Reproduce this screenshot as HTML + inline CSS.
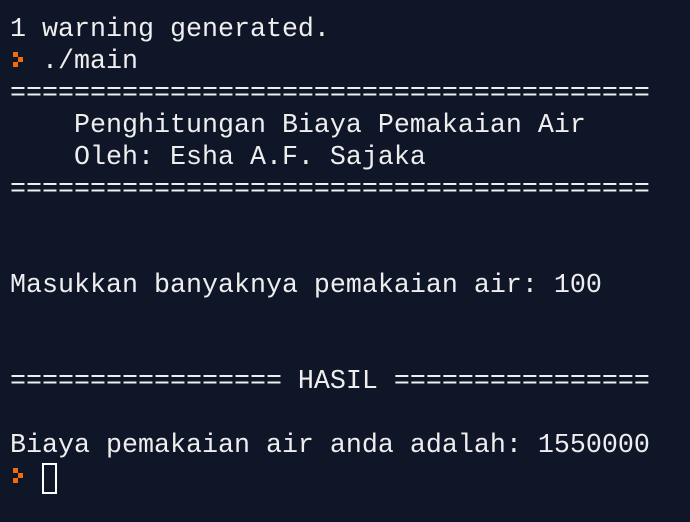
<!DOCTYPE html>
<html><head><meta charset="utf-8"><style>
html,body{margin:0;padding:0;background:#0e1628;width:690px;height:522px;overflow:hidden}
pre{margin:0;position:absolute;left:10px;top:14px;font-family:"Liberation Mono",monospace;font-size:26.67px;line-height:32px;color:#eeeeee}
.sq{position:absolute;width:5px;height:5px;background:#f26b0f}
.cur{position:absolute;left:42px;top:463px;width:11px;height:27px;border:2.5px solid #fff}
</style></head><body>
<pre>1 warning generated.
  ./main
========================================
    Penghitungan Biaya Pemakaian Air
    Oleh: Esha A.F. Sajaka
========================================


Masukkan banyaknya pemakaian air: 100


================= HASIL ================

Biaya pemakaian air anda adalah: 1550000
</pre>
<div class="sq" style="left:13px;top:52px"></div>
<div class="sq" style="left:18px;top:57px"></div>
<div class="sq" style="left:13px;top:62px"></div>
<div class="sq" style="left:13px;top:468px"></div>
<div class="sq" style="left:18px;top:473px"></div>
<div class="sq" style="left:13px;top:478px"></div>
<div class="cur"></div>
</body></html>
